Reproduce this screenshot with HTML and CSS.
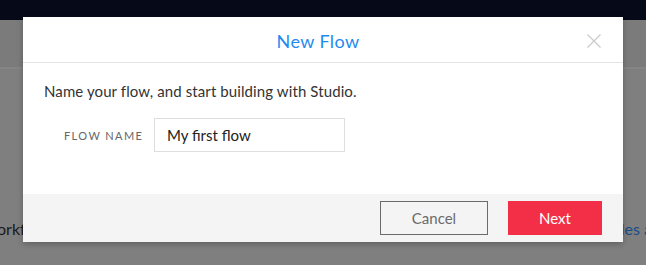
FILE: index.html
```html
<!DOCTYPE html>
<html>
<head>
<meta charset="utf-8">
<link rel="stylesheet" href="styles.css">
</head>
<body>
<div class="page">
  <div class="topbar"></div>
  <div class="subbar"></div>
  <div class="content">
    <span class="bg-left">orkf</span>
    <span class="bg-right">des a</span>
  </div>
</div>
<div class="modal">
  <div class="modal-header">
    <span class="modal-title">New Flow</span>
    <svg class="close" width="14" height="14" viewBox="0 0 14 14"><path d="M0.5 0.5 L13.5 13.5 M13.5 0.5 L0.5 13.5" stroke="#c9c9c9" stroke-width="1.2" fill="none"/></svg>
  </div>
  <div class="modal-body">
    <p class="intro">Name your flow, and start building with Studio.</p>
    <div class="field">
      <label class="field-label">FLOW NAME</label>
      <div class="input">My first flow</div>
    </div>
  </div>
  <div class="modal-footer">
    <button class="btn btn-cancel">Cancel</button>
    <button class="btn btn-next">Next</button>
  </div>
</div>
</body>
</html>
```
FILE: styles.css
```css
html, body {
  margin: 0;
  padding: 0;
}
body {
  width: 646px;
  height: 265px;
  overflow: hidden;
  background: #7f7f7f;
  font-family: Lato, "Open Sans", sans-serif;
  position: relative;
}
.page {
  display: flex;
  flex-direction: column;
}
.topbar {
  height: 20px;
  background: #060a18;
}
.subbar {
  height: 47px;
  background: #7b7b7b;
  border-bottom: 2px solid #858585;
}
.content {
  display: flex;
  justify-content: space-between;
  padding-top: 150px;
  font-size: 16px;
  line-height: 20px;
}
.bg-left {
  color: #1a1a1a;
  margin-left: -3px;
}
.bg-right {
  color: #1b4b85;
  margin-right: -6px;
}
.modal {
  position: absolute;
  top: 17px;
  left: 23px;
  width: 600px;
  height: 225px;
  background: #fff;
  display: flex;
  flex-direction: column;
  box-shadow: 0 2px 6px rgba(0,0,0,0.25);
}
.modal-header {
  height: 45px;
  border-bottom: 1px solid #e4e4e4;
  display: flex;
  align-items: center;
  justify-content: center;
  position: relative;
}
.modal-title {
  color: #1f8aef;
  font-size: 18px;
  letter-spacing: 0.4px;
  margin-left: -10px;
  margin-top: 2px;
}
.close {
  position: absolute;
  right: 22px;
  top: 17px;
}
.modal-body {
  flex: 1;
  padding: 0 21px;
}
.intro {
  margin: 18px 0 0 0;
  font-size: 15px;
  letter-spacing: 0.1px;
  line-height: 20px;
  color: #333;
}
.field {
  display: flex;
  align-items: center;
  margin-top: 17px;
  padding-left: 20px;
}
.field-label {
  font-size: 11px;
  letter-spacing: 1.4px;
  color: #666;
  width: 90px;
}
.input {
  width: 177px;
  height: 32px;
  border: 1px solid #dedede;
  padding-left: 12px;
  font-size: 15px;
  line-height: 32px;
  color: #222;
}
.modal-footer {
  height: 48px;
  background: #f4f4f4;
  display: flex;
  align-items: center;
  justify-content: flex-end;
  padding: 0 21px;
  gap: 20px;
}
.btn {
  height: 34px;
  font-family: Lato, "Open Sans", sans-serif;
  font-size: 15px;
  padding: 0;
  margin: 0;
  cursor: pointer;
}
.btn-cancel {
  width: 108px;
  background: #f4f4f4;
  border: 1px solid #6b6b6b;
  color: #6b6b6b;
}
.btn-next {
  width: 94px;
  background: #f22f46;
  border: none;
  color: #fff;
}
```
